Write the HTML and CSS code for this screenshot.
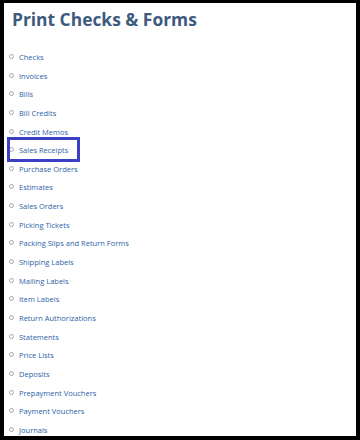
FILE: index.html
```html
<!DOCTYPE html>
<html lang="en">
<head>
    <meta charset="UTF-8">
    <meta name="viewport" content="width=device-width, initial-scale=1.0">
    <title>Print Checks &amp; Forms</title>
    <link rel="stylesheet" href="styles.css">
</head>
<body>
    <div class="frame">
        <h1 class="title">Print Checks &amp; Forms</h1>
        <ul class="form-list">
            <li><a href="#">Checks</a></li>
            <li><a href="#">Invoices</a></li>
            <li><a href="#">Bills</a></li>
            <li><a href="#">Bill Credits</a></li>
            <li><a href="#">Credit Memos</a></li>
            <li class="selected"><a href="#">Sales Receipts</a></li>
            <li><a href="#">Purchase Orders</a></li>
            <li><a href="#">Estimates</a></li>
            <li><a href="#">Sales Orders</a></li>
            <li><a href="#">Picking Tickets</a></li>
            <li><a href="#">Packing Slips and Return Forms</a></li>
            <li><a href="#">Shipping Labels</a></li>
            <li><a href="#">Mailing Labels</a></li>
            <li><a href="#">Item Labels</a></li>
            <li><a href="#">Return Authorizations</a></li>
            <li><a href="#">Statements</a></li>
            <li><a href="#">Price Lists</a></li>
            <li><a href="#">Deposits</a></li>
            <li><a href="#">Prepayment Vouchers</a></li>
            <li><a href="#">Payment Vouchers</a></li>
            <li><a href="#">Journals</a></li>
        </ul>
    </div>
</body>
</html>
```

FILE: styles.css
```css
html, body {
    margin: 0;
    padding: 0;
    background: #000;
}
body {
    font-family: "Open Sans", "Liberation Sans", sans-serif;
    width: 360px;
    height: 440px;
    overflow: hidden;
}
.frame {
    box-sizing: border-box;
    margin: 3px 4px 0 4px;
    width: 352px;
    height: 433px;
    background: #fff;
    overflow: hidden;
}
.title {
    margin: 0;
    padding: 4px 0 0 8px;
    font-size: 17.4px;
    line-height: 24px;
    font-weight: 700;
    color: #3e5a7e;
}
.form-list {
    list-style: none;
    margin: 17px 0 0 0;
    padding: 0;
}
.form-list li {
    position: relative;
    height: 18.65px;
    line-height: 18.65px;
    padding-left: 15px;
    font-size: 7.5px;
}
.form-list li::before {
    content: "";
    position: absolute;
    left: 5px;
    top: 6px;
    width: 3px;
    height: 3px;
    border: 1px solid #aaa;
    border-radius: 50%;
}
.form-list a {
    color: #2d5fa8;
    text-decoration: none;
}
.form-list li.selected::after {
    content: "";
    position: absolute;
    left: 3px;
    top: -4px;
    width: 67px;
    height: 19px;
    border: 3px solid #3b3fc4;
}
```
